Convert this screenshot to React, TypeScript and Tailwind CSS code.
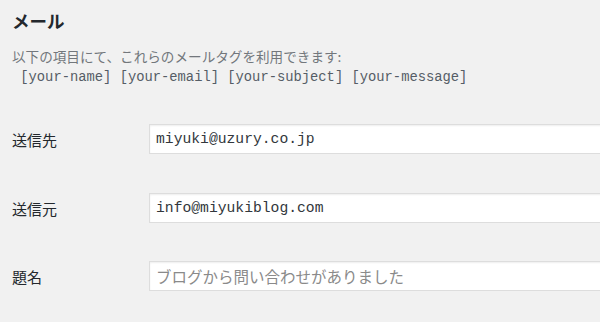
export default function App() {
  const jp = { fontFamily: '"Noto Sans CJK JP", "Noto Sans", sans-serif' };
  const mono = { fontFamily: '"Liberation Mono", "DejaVu Sans Mono", monospace' };
  const rows = [
    { label: "送信先", value: "miyuki@uzury.co.jp", placeholder: false, mb: "mb-[39px]" },
    { label: "送信元", value: "info@miyukiblog.com", placeholder: false, mb: "mb-[38px]" },
    { label: "題名", value: "ブログから問い合わせがありました", placeholder: true, mb: "" },
  ];
  return (
    <div className="w-[600px] h-[322px] overflow-hidden bg-[#f1f1f1] pl-3" style={jp}>
      <h2 className="mt-[9px] text-[17.5px] leading-[24px] font-bold text-[#23282d]">メール</h2>
      <p className="mt-[13px] text-[13.6px] leading-[20px] text-[#72777c]">
        以下の項目にて、これらのメールタグを利用できます:
      </p>
      <p className="mt-[2px] text-[13.8px] leading-[20px] text-[#555d66] whitespace-pre" style={mono}>
        {" [your-name] [your-email] [your-subject] [your-message]"}
      </p>
      <div className="mt-[36px] flex flex-col">
        {rows.map((r) => (
          <div key={r.label} className={`flex items-center ${r.mb}`}>
            <div className="w-[137px] shrink-0 text-[15px] leading-[20px] font-normal text-[#23282d] pt-[2px]">
              {r.label}
            </div>
            <div className="w-[470px] shrink-0 h-[30px] bg-white border border-[#dddddd] shadow-[inset_0_1px_2px_rgba(0,0,0,0.07)] flex items-center pl-[6px]">
              {r.placeholder ? (
                <span className="text-[15.5px] text-[#8a8a8a] leading-[20px]" style={jp}>
                  {r.value}
                </span>
              ) : (
                <span className="text-[14.7px] text-[#32373c] leading-[20px]" style={mono}>
                  {r.value}
                </span>
              )}
            </div>
          </div>
        ))}
      </div>
    </div>
  );
}
